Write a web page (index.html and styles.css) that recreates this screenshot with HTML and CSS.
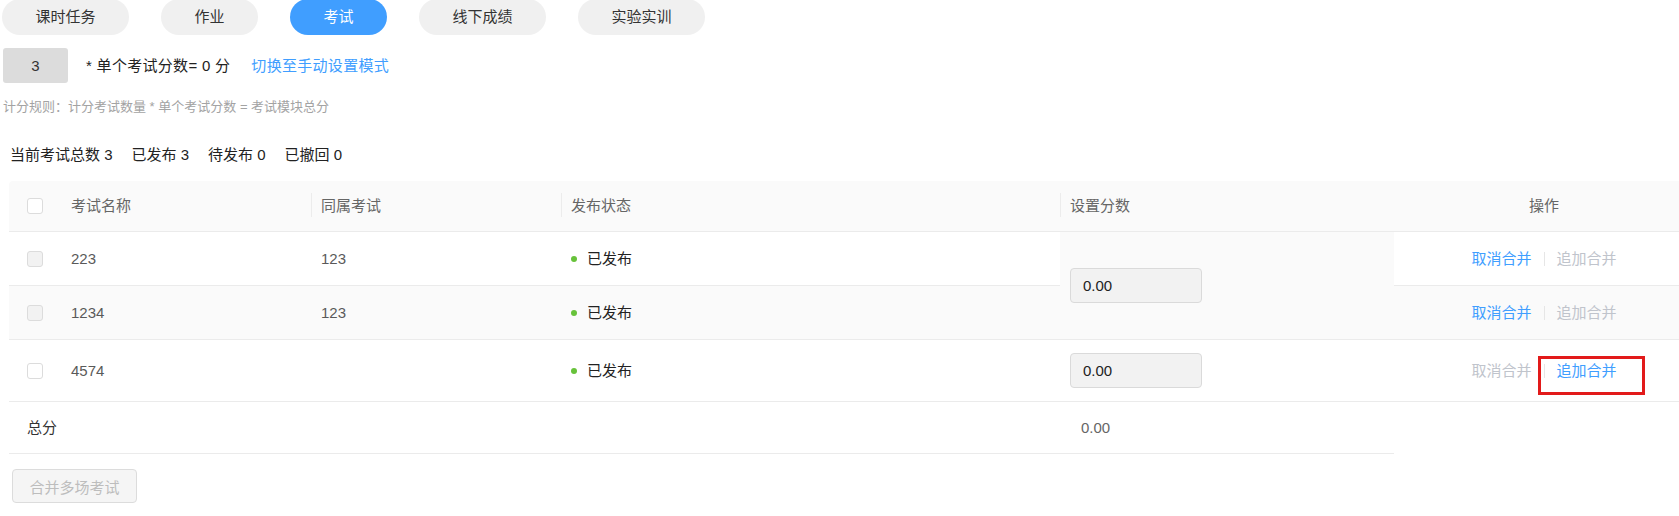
FILE: index.html
```html
<!DOCTYPE html>
<html lang="zh-CN">
<head>
<meta charset="utf-8">
<title>考试</title>
<link rel="stylesheet" href="styles.css">
</head>
<body>
<div class="page">
  <nav class="tabs">
    <a class="tab">课时任务</a>
    <a class="tab">作业</a>
    <a class="tab active">考试</a>
    <a class="tab">线下成绩</a>
    <a class="tab">实验实训</a>
  </nav>

  <div class="score-row">
    <div class="count-box">3</div>
    <span class="formula">* 单个考试分数= 0 分</span>
    <a class="link">切换至手动设置模式</a>
  </div>

  <p class="rule">计分规则：计分考试数量 * 单个考试分数 = 考试模块总分</p>

  <div class="stats">
    <span>当前考试总数 3</span>
    <span>已发布 3</span>
    <span>待发布 0</span>
    <span>已撤回 0</span>
  </div>

  <div class="table-wrap">
    <table class="grid">
      <colgroup>
        <col class="c-check">
        <col class="c-name">
        <col class="c-group">
        <col class="c-status">
        <col class="c-score">
        <col class="c-op">
      </colgroup>
      <thead>
        <tr>
          <th class="check-cell"><span class="checkbox"></span></th>
          <th class="name-cell">考试名称</th>
          <th class="sep">同属考试</th>
          <th class="sep">发布状态</th>
          <th class="sep">设置分数</th>
          <th class="op-head">操作</th>
        </tr>
      </thead>
      <tbody>
        <tr class="row">
          <td class="check-cell"><span class="checkbox disabled"></span></td>
          <td class="name-cell">223</td>
          <td>123</td>
          <td><span class="status"><i class="dot"></i>已发布</span></td>
          <td class="score-cell merged" rowspan="2"><input class="score-input" value="0.00" readonly></td>
          <td class="op-cell">
            <div class="ops"><a class="op on">取消合并</a><i class="op-sep"></i><a class="op off">追加合并</a></div>
          </td>
        </tr>
        <tr class="row striped">
          <td class="check-cell"><span class="checkbox disabled"></span></td>
          <td class="name-cell">1234</td>
          <td>123</td>
          <td><span class="status"><i class="dot"></i>已发布</span></td>
          <td class="op-cell">
            <div class="ops"><a class="op on">取消合并</a><i class="op-sep"></i><a class="op off">追加合并</a></div>
          </td>
        </tr>
        <tr class="row tall">
          <td class="check-cell"><span class="checkbox"></span></td>
          <td class="name-cell">4574</td>
          <td></td>
          <td><span class="status"><i class="dot"></i>已发布</span></td>
          <td class="score-cell"><input class="score-input" value="0.00" readonly></td>
          <td class="op-cell">
            <div class="ops"><a class="op off">取消合并</a><i class="op-sep"></i><a class="op on marked">追加合并<span class="highlight"></span></a></div>
          </td>
        </tr>
        <tr class="row total">
          <td class="total-label" colspan="4">总分</td>
          <td class="total-score">0.00</td>
          <td class="no-border"></td>
        </tr>
      </tbody>
    </table>
  </div>

  <button class="merge-btn" disabled>合并多场考试</button>
</div>
</body>
</html>
```

FILE: styles.css
```css
html, body {
  margin: 0;
  padding: 0;
  background: #fff;
  overflow: hidden;
}

body {
  font-family: "Liberation Sans", "Noto Sans CJK SC", sans-serif;
  font-size: 15px;
  color: #333;
}

.page {
  padding: 0 0 0 2px;
}

/* tabs */
.tabs {
  display: flex;
  gap: 32px;
  margin-top: -1px;
}

.tab {
  display: block;
  height: 36px;
  line-height: 36px;
  padding: 0 33.5px;
  border-radius: 18px;
  background: #f0f0f0;
  color: #333;
  font-size: 15px;
  white-space: nowrap;
}

.tab.active {
  background: #409eff;
  color: #fff;
}

/* score row */
.score-row {
  display: flex;
  align-items: center;
  margin-top: 13px;
  margin-left: 1px;
  height: 35px;
}

.count-box {
  width: 65px;
  height: 35px;
  line-height: 35px;
  text-align: center;
  background: #dcdcdc;
  border-radius: 3px;
  color: #333;
}

.formula {
  margin-left: 18px;
  color: #222;
  line-height: 20px;
  letter-spacing: 0.3px;
}

.link {
  margin-left: 21px;
  color: #409eff;
  line-height: 20px;
  letter-spacing: 0.3px;
}

.rule {
  margin: 15px 0 0 1px;
  font-size: 13px;
  line-height: 18px;
  color: #a3a3a3;
}

.stats {
  display: flex;
  gap: 19px;
  margin: 29px 0 0 8px;
  line-height: 20px;
  color: #222;
}

/* table */
.table-wrap {
  margin: 16px 0 0 7px;
}

.grid {
  width: 1685px;
  border-collapse: separate;
  border-spacing: 0;
  table-layout: fixed;
}

.c-check { width: 51px; }
.c-name { width: 251px; }
.c-group { width: 250px; }
.c-status { width: 499px; }
.c-score { width: 334px; }
.c-op { width: 300px; }

.grid th,
.grid td {
  box-sizing: border-box;
  padding: 0 0 0 10px;
  text-align: left;
  vertical-align: middle;
  border-bottom: 1px solid #ebebeb;
  line-height: 20px;
}

.grid th {
  position: relative;
  height: 51px;
  background: #fafafa;
  color: #666;
  font-weight: normal;
}

.grid th:first-child {
  border-top-left-radius: 4px;
}

.grid th.sep::before {
  content: "";
  position: absolute;
  left: 0;
  top: 12px;
  width: 1px;
  height: 24px;
  background: #ececec;
}

.grid th.op-head {
  text-align: center;
  padding: 0;
}

.grid .check-cell {
  padding-left: 18px;
}

.grid .name-cell {
  padding-left: 11px;
}

.grid td {
  color: #5a5a5a;
}

.row td { height: 54px; }
.row.tall td { height: 62px; }
.row.total td { height: 52px; }

.row.striped td,
.grid td.merged {
  background: #fafafa;
}

.checkbox {
  display: block;
  width: 16px;
  height: 16px;
  box-sizing: border-box;
  border: 1px solid #dcdcdc;
  border-radius: 3px;
  background: #fff;
}

.checkbox.disabled {
  background: #f2f2f2;
}

.status {
  display: flex;
  align-items: center;
  color: #222;
}

.dot {
  width: 6px;
  height: 6px;
  border-radius: 50%;
  background: #67c23a;
  margin-right: 10px;
}

.score-input {
  display: block;
  box-sizing: border-box;
  width: 132px;
  height: 35px;
  padding: 0 0 0 12px;
  border: 1px solid #dadada;
  border-radius: 4px;
  background: #f2f2f2;
  font: inherit;
  font-size: 15px;
  color: #222;
  outline: none;
}

.grid td.op-cell {
  padding: 0;
}

.ops {
  display: flex;
  justify-content: center;
  align-items: center;
  gap: 12px;
}

.op {
  position: relative;
  line-height: 20px;
  white-space: nowrap;
}

.op.on { color: #409eff; }
.op.off { color: #c0c4cc; }

.op-sep {
  width: 1px;
  height: 14px;
  background: #e6e6e6;
}

.highlight {
  position: absolute;
  left: -19px;
  top: -5px;
  width: 107px;
  height: 39px;
  box-sizing: border-box;
  border: 3px solid #e21a1a;
}

.grid td.total-label {
  padding-left: 18px;
  color: #333;
}

.grid td.total-score {
  padding-left: 21px;
  color: #666;
}

.grid td.no-border {
  border-bottom: none;
}

.merge-btn {
  display: block;
  margin: 15px 0 0 10px;
  width: 125px;
  height: 34px;
  padding: 0;
  border: 1px solid #dcdcdc;
  border-radius: 4px;
  background: #f5f5f5;
  color: #bdbdbd;
  font: inherit;
  font-size: 15px;
}
```
